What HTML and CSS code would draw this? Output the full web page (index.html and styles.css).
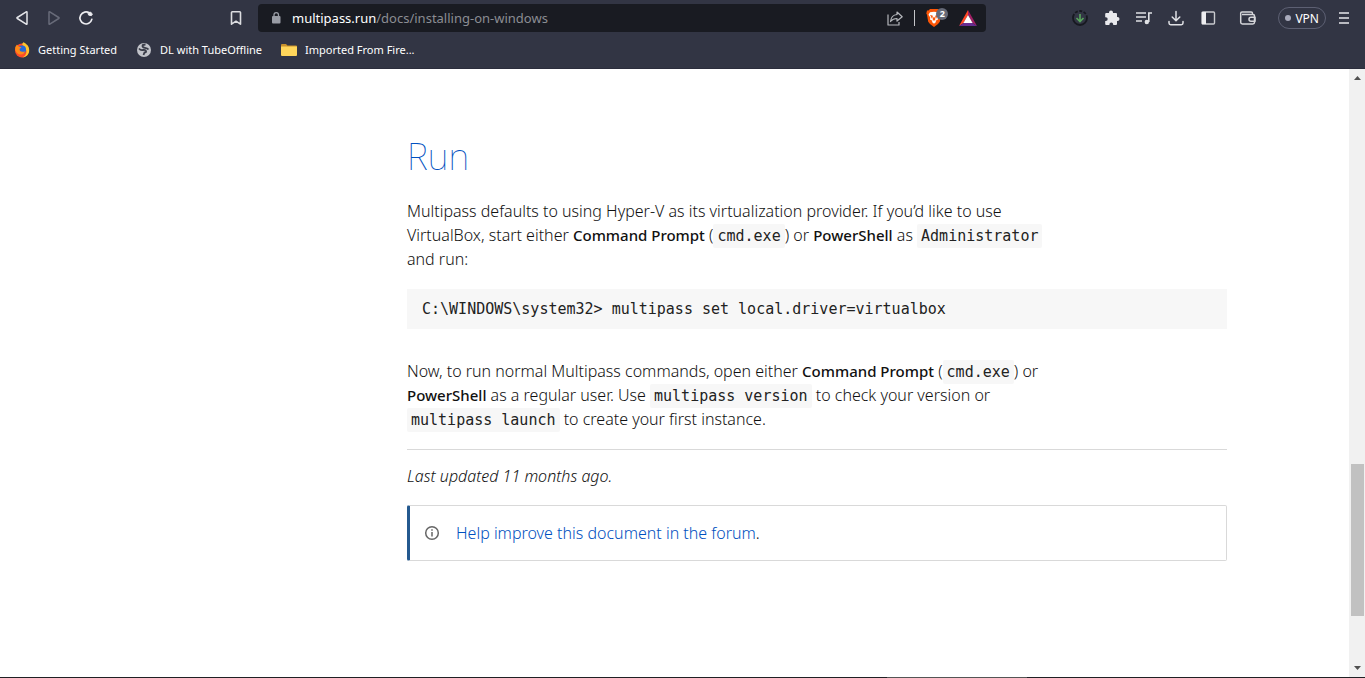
FILE: index.html
```html
<!DOCTYPE html>
<html lang="en">
<head>
<meta charset="utf-8">
<title>Installing on Windows | Multipass</title>
<link rel="stylesheet" href="styles.css">
</head>
<body>
<header class="browser">
  <div class="toolbar">
    <nav class="nav-buttons" aria-label="History">
      <button class="icon-button" aria-label="Back"><svg width="16" height="16" viewBox="0 0 16 16" fill="none" stroke="#e3e4e8" stroke-width="1.5" stroke-linejoin="round"><path d="M13 2.2v11.6q0 .8-.8.3L3.3 8.5q-.8-.5 0-1l8.9-5.6q.8-.5.8.3z"/></svg></button>
      <button class="icon-button" aria-label="Forward"><svg width="16" height="16" viewBox="0 0 16 16" fill="none" stroke="#686b79" stroke-width="1.5" stroke-linejoin="round"><path d="M3 2.2v11.6q0 .8.8.3l8.900-5.600q.8-.5 0-1L3.800 1.900Q3 1.400 3 2.200z"/></svg></button>
      <button class="icon-button" aria-label="Reload"><svg width="16" height="16" viewBox="0 0 16 16" fill="none" stroke="#ececf0" stroke-width="1.700" stroke-linecap="round"><path d="M13.800 9.400A6 6 0 1 1 11.500 3.100"/><path d="M10.200 2.500l2.600-.3 1.500 2-.8 1.400-2.500-.4z" fill="#ececf0" stroke-width="1"/></svg></button>
    </nav>
    <button class="icon-button bookmark" aria-label="Bookmark this page"><svg width="16" height="16" viewBox="0 0 16 16" fill="none" stroke="#dcdde1" stroke-width="1.600" stroke-linejoin="round"><path d="M3.500 2.500q0-.8.8-.8h7.400q.8 0 .8.800v11.700L8 11.200l-4.500 3z"/></svg></button>
    <div class="address">
      <svg class="lock" width="10" height="14" viewBox="0 0 10 14"><rect x="1" y="5" width="8.500" height="7.500" rx="1" fill="#999ca5"/><path d="M3 5.500V3.800a2.200 2.200 0 0 1 4.500 0v1.700" fill="none" stroke="#999ca5" stroke-width="1.300"/></svg>
      <span class="url"><span class="host">multipass.run</span>/docs/installing-on-windows</span>
      <button class="icon-button" aria-label="Share"><svg width="18" height="16" viewBox="0 0 18 16" fill="none" stroke="#b5b7bc" stroke-width="1.200" stroke-linejoin="round"><path d="M2 4.500V15h11v-3"/><path d="M4.500 11.500C5 7 7.500 4.800 11 4.500V2l5.200 4.800L11 11V8.500c-2.900 0-4.900 1-6.500 3z"/></svg></button>
      <span class="divider"></span>
      <button class="icon-button shield" aria-label="Brave Shields"><svg width="16" height="18" viewBox="0 0 16 18"><path d="M4 0h8l1.500 1.500H15l.7 3-.7 1.200-1.200 7L12 15l-4 3-4-3-1.800-2.300L1 5.700.3 4.500l.7-3h1.500z" fill="#fb5607"/><path d="M4 3.300l4-.5 4 .5 1.500 2.400-1.800 2.900.3 1.900-2.400 1.200L10 13l-2 1.700L6 13l.4-1.300L4 10.500l.3-1.900-1.800-2.900z" fill="#fff"/><path d="M4 6l2.500.6L7 8l-.4 2.300L8 12l1.400-1.700L9 8l.5-1.400L12 6l-1.200 2-.4 1.500L9.600 9 9.300 7.300 8 9 6.700 7.300 6.400 9l-.8.5L5.200 8z" fill="#fb5607"/></svg><span class="badge">2</span></button>
      <button class="icon-button" aria-label="Brave Rewards"><svg width="18" height="16" viewBox="0 0 18 16"><path d="M9 0L0 16l4.600-3L9 5z" fill="#ff4724"/><path d="M9 0l9 16-4.600-3L9 5z" fill="#9e1f63"/><path d="M0 16h18l-4.600-3H4.600z" fill="#662d91"/><path d="M9 5l4.600 8H4.400z" fill="#fff"/></svg></button>
    </div>
    <div class="actions">
      <button class="icon-button" aria-label="Download helper"><svg width="16" height="16" viewBox="0 0 16 16" fill="none"><circle cx="8" cy="8" r="7" stroke="#171920" stroke-width="1.800" stroke-dasharray="26 1.500 3 1.500 3 1.500 3 1.500"/><path d="M8 4v7.500M4.500 8L8 11.500 11.500 8" stroke="#58a65c" stroke-width="1.600"/></svg></button>
      <button class="icon-button" aria-label="Extensions"><svg width="16" height="16" viewBox="0 0 16 16" fill="#e9e9ed"><path d="M2.200 3H5V2.500a2 2 0 0 1 4 0V3h3q1 0 1 1v3h.5a2 2 0 0 1 0 4H13v3q0 1-1 1H9.200v-.6a1.900 1.900 0 0 0-3.800 0v.6H2.200q-1 0-1-1v-3h.6a1.900 1.900 0 0 0 0-3.800h-.6V4q0-1 1-1z"/></svg></button>
      <button class="icon-button" aria-label="Media controls"><svg width="16" height="16" viewBox="1 0 16 16" fill="none" stroke="#e0e1e5" stroke-width="1.600"><path d="M1 3h10M1 7h10M1 11h6M17 3h-3.200v9"/><circle cx="11.800" cy="12" r="2.200" fill="#e0e1e5" stroke="none"/></svg></button>
      <button class="icon-button" aria-label="Downloads"><svg width="16" height="16" viewBox="0 0 16 16" fill="none" stroke="#e0e1e5" stroke-width="1.500" stroke-linecap="round" stroke-linejoin="round"><path d="M8 1.500v9M4.200 7L8 10.800 11.800 7M1 11.500V13q0 1.700 1.700 1.700h10.600Q15 14.700 15 13v-1.500"/></svg></button>
      <button class="icon-button" aria-label="Sidebar"><svg width="16" height="16" viewBox="0 0 16 16" fill="none"><rect x="2" y="2" width="12.500" height="12" rx="1" stroke="#c9cace" stroke-width="1.400"/><path d="M2 2h4v12H2z" fill="#ededf0"/></svg></button>
      <button class="icon-button wallet" aria-label="Wallet"><svg width="18" height="16" viewBox="0 0 18 16" fill="none" stroke="#d5d6da" stroke-width="1.500" stroke-linejoin="round"><path d="M13.500 4.500V3.300Q13.500 2 12.200 2H3Q1.700 2 1.700 3.300v9Q1.700 14 3.400 14h10.400q1.700 0 1.700-1.700V6q0-1.500-1.500-1.500H3"/><path d="M16 7.200h-4a2 2 0 0 0 0 4h4z"/></svg></button>
      <button class="vpn"><span class="dot"></span>VPN</button>
      <button class="icon-button" aria-label="Menu"><svg width="12" height="16" viewBox="0 0 12 16" stroke="#b9bac1" stroke-width="2"><path d="M1 3h10M1 8h10M1 13h10"/></svg></button>
    </div>
  </div>
  <nav class="bookmarks" aria-label="Bookmarks">
    <a href="#started"><svg width="16" height="16" viewBox="0 0 16 16"><circle cx="8" cy="8.500" r="7" fill="#ff4b28"/><path d="M8 2c1-.8 1-1.500 1.200-1.800 3.500 1.500 6 4 6 8 0 3.800-2.500 6.800-7 7.200 3-1 5-4 4-7.400z" fill="#ffc52c"/><circle cx="8" cy="7.500" r="4" fill="#2669d9"/><path d="M1.200 8Q1 4 3 2.500l1.500 2 3 .7-2 1.800.5 2q2 1.500 5 .2-1 3.500-4.600 3.300T1.200 8z" fill="#ff8a16"/></svg>Getting Started</a>
    <a href="#tube"><svg width="16" height="16" viewBox="0 0 16 16"><circle cx="8" cy="8" r="7" fill="#c2c4ca"/><path d="M3 6.500q1.500 2 4 1.500t3 1-1.500 1.500L7.500 13M9.500 2.500q-3 0-3 1.500t2.500 1.800 3.500 1.700" fill="none" stroke="#3a3d49" stroke-width="1.800"/></svg>DL with TubeOffline</a>
    <a href="#imported"><svg width="16" height="16" viewBox="0 0 16 16"><path d="M0 3q0-1 1-1h4l1.500 1.500H15q1 0 1 1V7H0z" fill="#c8912c"/><path d="M0 4.500h16V13q0 1-1 1H1q-1 0-1-1z" fill="#ffd65b"/></svg>Imported From Fire...</a>
  </nav>
</header>
<div class="viewport">
  <main class="page">
    <article class="doc">
      <h2>Run</h2>
      <p>Multipass defaults to using Hyper-V as its virtualization provider. If you’d like to use<br>VirtualBox, start either <strong>Command Prompt</strong> (<code>cmd.exe</code>) or <strong>PowerShell</strong> as <code>Administrator</code><br>and run:</p>
      <pre>C:\WINDOWS\system32&gt; multipass set local.driver=virtualbox</pre>
      <p>Now, to run normal Multipass commands, open either <strong>Command Prompt</strong> (<code>cmd.exe</code>) or<br><strong>PowerShell</strong> as a regular user. Use <code>multipass version</code> to check your version or<br><code>multipass launch</code> to create your first instance.</p>
      <hr>
      <p class="updated"><em>Last updated 11 months ago.</em></p>
      <div class="note">
        <svg width="16" height="16" viewBox="0 0 16 16" fill="none" stroke="#666" stroke-width="1.500"><circle cx="8" cy="8" r="6.300"/><path d="M8 7v4.500M8 4.200v1.600"/></svg>
        <p><a href="#forum">Help improve this document in the forum</a>.</p>
      </div>
    </article>
  </main>
  <div class="scrollbar" aria-hidden="true">
    <svg width="7" height="4" viewBox="0 0 7 4"><path d="M0 4L3.500 0 7 4z" fill="#505050"/></svg>
    <div class="track"><div class="thumb"></div></div>
    <svg width="7" height="4" viewBox="0 0 7 4"><path d="M0 0h7L3.500 4z" fill="#505050"/></svg>
  </div>
</div>
<div class="taskbar"><span class="task"></span></div>
</body>
</html>
```
FILE: styles.css
```css
* { box-sizing: border-box; }

body {
  margin: 0;
  min-height: 100vh;
  display: flex;
  flex-direction: column;
  background: #fff;
  font-family: "Noto Sans", sans-serif;
}

button { font: inherit; color: inherit; border: 0; padding: 0; background: none; }

svg { display: block; flex: none; }

.browser {
  height: 69px;
  background: #323544;
  border-bottom: 1px solid #2b2d3c;
  color: #fff;
}

.toolbar { display: flex; align-items: center; height: 36px; padding: 0 15px 0 14px; }

.icon-button { display: flex; align-items: center; justify-content: center; flex: none; }

.nav-buttons { display: flex; gap: 16px; }

.bookmark { margin: 0 14px 0 134px; }

.address {
  flex: 1;
  display: flex;
  align-items: center;
  height: 28px;
  padding: 0 9px 0 13px;
  border-radius: 4px;
  background: #191b22;
}

.url { flex: 1; margin-left: 11px; font-size: 13px; color: #8b8d93; white-space: nowrap; }
.host { color: #fff; }

.divider { width: 1px; height: 16px; margin: 0 11px 0 10px; background: #c4c5c9; }

.shield { position: relative; margin-right: 17px; }

.badge {
  position: absolute;
  top: -1px;
  left: 10px;
  width: 12px;
  height: 12px;
  border-radius: 6px;
  background: #656977;
  color: #fff;
  font-size: 9px;
  font-weight: 700;
  line-height: 12px;
  text-align: center;
}

.actions { display: flex; align-items: center; gap: 16px; margin-left: 86px; }

.wallet { margin-left: 7px; }

.vpn {
  display: flex;
  align-items: center;
  gap: 4px;
  height: 22px;
  margin: 0 -4px 0 5px;
  padding: 0 6px;
  border: 1px solid #5d6073;
  border-radius: 11px;
  font-size: 12px;
}

.dot { width: 6px; height: 6px; border-radius: 3px; background: #a9abbc; }

.bookmarks { display: flex; gap: 19px; padding: 5px 14px; font-size: 11px; line-height: 18px; }

.bookmarks a { display: flex; align-items: center; gap: 8px; color: #fff; text-decoration: none; white-space: nowrap; }

.viewport { flex: 1; display: flex; }

.page { flex: 1; min-width: 0; }

.doc {
  max-width: 1105px;
  margin: 0 auto;
  padding: 64px 0 0 285px;
  color: #111;
  font-size: 16px;
  font-weight: 300;
  line-height: 24px;
}

.doc h2 { margin: 0 0 18px; color: #0050c0; font-size: 36px; font-weight: 100; line-height: 48px; }

.doc p { margin: 0; white-space: nowrap; }

.doc strong { font-size: 15px; font-weight: 500; line-height: 1; }

.doc code, .doc pre { color: #222; font-family: "DejaVu Sans Mono", monospace; font-size: 15px; font-weight: 400; }

.doc code { padding: 3px 4px; border-radius: 2px; background: #f7f7f7; line-height: 1; }

.doc pre { margin: 18px 0 30px; padding: 8px 15px; background: #f7f7f7; line-height: 24px; }

.doc hr { height: 1px; margin: 18px 0 14px; border: 0; background: #d9d9d9; }

.note {
  display: flex;
  align-items: center;
  gap: 16px;
  height: 56px;
  margin-top: 17px;
  padding: 0 14px;
  border: 1px solid #d9d9d9;
  border-left: 3px solid #24598f;
  border-radius: 2px;
}

.note a { color: #0050c0; text-decoration: none; }

.scrollbar {
  display: flex;
  flex-direction: column;
  align-items: center;
  width: 16px;
  padding: 7px 0;
  background: #f1f1f1;
}

.track { flex: 1; display: flex; flex-direction: column; margin: 6px 0; padding-top: 378px; }

.thumb { width: 13px; height: 152px; background: #c1c1c1; }

.taskbar { display: flex; height: 1px; padding-left: 65%; background: #202024; }

.task { width: 140px; background: #555; }
```
